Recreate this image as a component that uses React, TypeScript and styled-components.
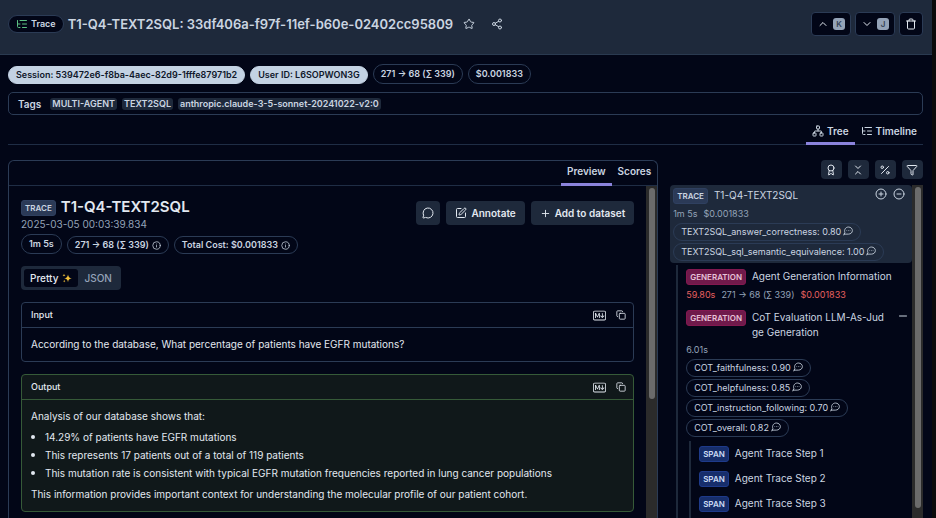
import React from "react";
import styled, { createGlobalStyle, css } from "styled-components";
import {
  Award,
  ChevronDown,
  ChevronsDownUp,
  ChevronUp,
  CircleMinus,
  CirclePlus,
  Copy,
  Filter,
  Info,
  ListTree,
  MessageCircle,
  Minus,
  Network,
  Percent,
  Plus,
  Share2,
  SquarePen,
  Star,
  Trash,
} from "lucide-react";
import { BsMarkdown } from "react-icons/bs";

const color = {
  page: "#020617",
  raised: "#1e293b",
  border: "#1f2d45",
  borderStrong: "#2b3b55",
  text: "#cbd5e1",
  bright: "#e2e8f0",
  muted: "#94a3b8",
  accent: "#8b83dc",
  red: "#e5605f",
  green: "#365a38",
};

const GlobalStyle = createGlobalStyle`
  *, *::before, *::after { box-sizing: border-box; }
  body {
    margin: 0;
    background: #0b0b0b;
    color: ${color.text};
    font-family: Inter, sans-serif;
    font-size: 10px;
    line-height: 16px;
  }
  button { font: inherit; color: inherit; cursor: pointer; margin: 0; }
  h1, h2, h3, p, ul { margin: 0; padding: 0; font: inherit; }
  svg { flex: none; display: block; }
`;

const Page = styled.div`
  display: flex;
  flex-direction: column;
  height: 100vh;
  margin-right: 4px;
  overflow: hidden;
  background: ${color.page};
`;

const Header = styled.header`
  flex: none;
  display: flex;
  align-items: center;
  justify-content: space-between;
  padding: 12px 9px 18px 8px;
  background: ${color.raised};
  border-bottom: 1px solid #2a3a50;
`;

const Cluster = styled.div<{ $gap: number }>`
  display: flex;
  align-items: center;
  gap: ${(p) => p.$gap}px;
`;

const TypePill = styled.span`
  display: flex;
  align-items: center;
  gap: 3px;
  height: 18px;
  padding: 0 7px;
  border: 1px solid ${color.borderStrong};
  border-radius: 9px;
  background: ${color.page};
  font-size: 9px;
  font-weight: 600;
  svg { color: #5cc283; }
`;

const PageTitle = styled.h1`
  font-size: 13px;
  line-height: 20px;
  font-weight: 600;
  margin-left: 4px;
`;

const GhostButton = styled.button`
  display: flex;
  padding: 0;
  border: 0;
  background: none;
`;

const TitleActions = styled.div`
  display: flex;
  gap: 16px;
  margin-left: 10px;
`;

const NavButton = styled.button`
  display: flex;
  align-items: center;
  justify-content: center;
  gap: 4px;
  height: 24px;
  min-width: 24px;
  padding: 0 5px;
  border: 1px solid ${color.borderStrong};
  border-radius: 4px;
  background: ${color.page};
  color: ${color.bright};
`;

const NavKeyButton = styled(NavButton)`
  width: 40px;
`;

const Key = styled.kbd`
  width: 12px;
  height: 12px;
  border-radius: 3px;
  background: ${color.muted};
  color: #334155;
  font: 600 8px/12px Inter, sans-serif;
  text-align: center;
`;

const Body = styled.main`
  flex: 1;
  min-height: 0;
  display: flex;
  flex-direction: column;
  padding: 9px 9px 0 8px;
`;

const PillRow = styled.div`
  flex: none;
  display: flex;
  align-items: flex-end;
  gap: 5px;
`;

const Pill = styled.span<{ $solid?: boolean; $tall?: boolean }>`
  display: inline-flex;
  align-items: center;
  gap: 3px;
  height: ${(p) => (p.$tall ? 20 : 18)}px;
  padding: 0 7px;
  border: 1px solid ${color.borderStrong};
  border-radius: 10px;
  font-size: 9px;
  font-weight: 600;
  white-space: nowrap;
  ${(p) =>
    p.$solid &&
    css`
      background: #c3d2e3;
      border-color: #c3d2e3;
      color: #0f172a;
      text-decoration: none;
    `}
`;

const TagBox = styled.section`
  flex: none;
  display: flex;
  align-items: center;
  gap: 5px;
  height: 23px;
  margin-top: 8px;
  padding: 0 9px;
  border: 1px solid ${color.borderStrong};
  border-radius: 5px;
`;

const TagLabel = styled.h2`
  font-size: 10px;
  font-weight: 600;
  margin-right: 4px;
`;

const Tag = styled.span`
  padding: 0 2px;
  border-radius: 3px;
  background: ${color.raised};
  font-size: 9px;
  line-height: 12px;
  font-weight: 600;
`;

const TabBar = styled.div<{ $view?: boolean }>`
  flex: none;
  display: flex;
  justify-content: flex-end;
  height: ${(p) => (p.$view ? 30 : 25)}px;
  border-bottom: 1px solid ${color.border};
  & > button { padding: ${(p) => (p.$view ? "5px 6px 0" : "0 6px 3px")}; }
`;

const Tab = styled.button<{ $active?: boolean }>`
  display: flex;
  align-items: center;
  gap: 3px;
  margin-bottom: -1px;
  border: 0;
  border-bottom: 3px solid ${(p) => (p.$active ? color.accent : "transparent")};
  background: none;
  font-size: 10px;
  font-weight: 600;
`;

const Columns = styled.div`
  flex: 1;
  min-height: 0;
  display: grid;
  grid-template-columns: minmax(0, 72fr) minmax(0, 28fr);
  grid-template-rows: minmax(0, 1fr);
  gap: 12px;
  margin-top: 15px;
`;

const Panel = styled.section`
  display: flex;
  flex-direction: column;
  min-height: 0;
  border: 1px solid ${color.borderStrong};
  border-bottom: 0;
  border-radius: 6px 6px 0 0;
`;

const Scroller = styled.div`
  flex: 1;
  min-height: 0;
  display: flex;
`;

const ScrollContent = styled.div<{ $pad?: boolean }>`
  flex: 1;
  min-width: 0;
  overflow: hidden;
  padding: ${(p) => (p.$pad ? "11px 12px 0" : "0")};
`;

const Track = styled.div`
  flex: none;
  width: 11px;
  padding: 2px 2px 0 3px;
  background: #2b2b2b;
`;

const Thumb = styled.div<{ $length: number }>`
  height: ${(p) => p.$length}%;
  border-radius: 3px;
  background: #6b6b6b;
`;

const Summary = styled.div`
  display: flex;
  align-items: flex-start;
  justify-content: space-between;
`;

const SummaryHeading = styled.div`
  display: flex;
  align-items: flex-end;
  gap: 5px;
`;

const TraceTitle = styled.h2`
  color: ${color.bright};
  font-size: 15px;
  line-height: 19px;
  font-weight: 600;
`;

const Timestamp = styled.p`
  color: ${color.muted};
  line-height: 16px;
`;

const kinds = {
  trace: { bg: "#2b3a57", border: "#2f4060", fg: "#cbd5e1" },
  generation: { bg: "#701a4b", border: "#831850", fg: "#e7c3d8" },
  span: { bg: "#172e6b", border: "#1e3a8a", fg: "#cddcf5" },
};

const Kind = styled.span<{ $kind: keyof typeof kinds }>`
  flex: none;
  height: 16px;
  padding: 0 3px;
  border: 1px solid ${(p) => kinds[p.$kind].border};
  border-radius: 3px;
  background: ${(p) => kinds[p.$kind].bg};
  color: ${(p) => kinds[p.$kind].fg};
  font-size: 8px;
  line-height: 14px;
  font-weight: 600;
`;

const Actions = styled.div`
  display: flex;
  gap: 6px;
  margin-top: 4px;
`;

const ActionButton = styled.button`
  display: flex;
  align-items: center;
  justify-content: center;
  gap: 4px;
  height: 24px;
  min-width: 24px;
  padding: 0 9px;
  border: 0;
  border-radius: 4px;
  background: ${color.raised};
  color: ${color.bright};
  font-weight: 600;
`;

const IconAction = styled(ActionButton)`
  padding: 0 6px;
`;

const MetricRow = styled(PillRow)`
  margin-top: 2px;
`;

const Toggle = styled.div`
  display: inline-flex;
  margin-top: 12px;
  padding: 3px;
  border-radius: 4px;
  background: ${color.raised};
  vertical-align: top;
`;

const ToggleItem = styled.button<{ $active?: boolean }>`
  display: flex;
  align-items: center;
  gap: 4px;
  height: 18px;
  padding: 0 6px;
  border: 0;
  border-radius: 3px;
  background: ${(p) => (p.$active ? color.page : "transparent")};
  color: ${(p) => (p.$active ? color.bright : color.muted)};
  font-weight: 500;
`;

const Card = styled.article<{ $output?: boolean }>`
  margin-top: 12px;
  border: 1px solid;
  border-color: ${(p) => (p.$output ? color.green : color.borderStrong)};
  border-radius: 4px;
  background: ${(p) => (p.$output ? "#10181a" : "transparent")};
  color: ${color.bright};
`;

const CardHeader = styled.header`
  display: flex;
  align-items: center;
  justify-content: space-between;
  height: 25px;
  padding: 0 7px 0 9px;
  border-bottom: 1px solid;
  border-color: inherit;
  font-size: 9px;
  font-weight: 500;
`;

const CardBody = styled.div`
  display: flex;
  flex-direction: column;
  gap: 4px;
  padding: 8px 9px 9px;
`;

const BulletList = styled.ul`
  padding-left: 14px;
  line-height: 18px;
  list-style: none;
`;

const Bullet = styled.li`
  display: flex;
  &::before {
    content: "";
    width: 4px;
    height: 4px;
    margin: 7px 10px 0 -14px;
    border-radius: 2px;
    background: currentColor;
  }
`;

const TreePane = styled.aside`
  display: flex;
  flex-direction: column;
  min-height: 0;
`;

const TreeTools = styled.div`
  display: flex;
  justify-content: flex-end;
  gap: 6px;
  margin-bottom: 6px;
`;

const ToolButton = styled.button`
  display: flex;
  align-items: center;
  justify-content: center;
  width: 21px;
  height: 19px;
  padding: 0;
  border: 0;
  border-radius: 4px;
  background: ${color.raised};
  color: ${color.bright};
`;

const Node = styled.div<{ $root?: boolean }>`
  padding: ${(p) => (p.$root ? "3px 7px 2px 3px" : "0")};
  border-radius: 4px;
  background: ${(p) => (p.$root ? color.raised : "transparent")};
  & + & { margin-top: 9px; }
`;

const NodeHead = styled.div`
  display: flex;
  align-items: flex-start;
  gap: 6px;
`;

const NodeName = styled.h3`
  flex: 1;
  min-width: 0;
  padding-right: 4px;
  color: ${color.text};
  font-size: 10px;
  line-height: 15px;
  word-break: break-all;
`;

const NodeStats = styled.p`
  display: flex;
  gap: 6px;
  margin-top: 3px;
  color: ${color.muted};
  font-size: 9px;
  line-height: 13px;
`;

const Hot = styled.span`
  color: ${color.red};
`;

const Scores = styled.div`
  display: flex;
  flex-direction: column;
  align-items: flex-start;
  gap: 2px;
  margin-top: 3px;
`;

const Score = styled(Pill)`
  font-weight: 400;
  gap: 2px;
  svg { margin-bottom: 2px; }
`;

const Branch = styled.div<{ $depth: number }>`
  margin: ${(p) => (p.$depth === 1 ? "2px 3px 0 6px" : "4px 0 0 3px")};
  padding: ${(p) => (p.$depth === 1 ? "4px" : "5px")} 0 0 8px;
  border-left: 2px solid ${color.raised};
`;

const Sparkles = () => (
  <svg width="10" height="10" viewBox="0 0 20 20" fill="#f3c13a" aria-hidden="true">
    <path d="M12 3c.8 5 2.600 6.800 7.500 7.600C14.600 11.400 12.800 13.200 12 18.500c-.8-5.300-2.600-7.100-7.500-7.900C9.400 9.800 11.200 8 12 3z" />
    <path d="M4 1.500c.4 2 1 2.600 3 3-2 .4-2.600 1-3 3-.4-2-1-2.600-3-3 2-.4 2.600-1 3-3z" />
    <path d="M4.500 13.500c.4 1.800.9 2.300 2.700 2.700-1.800.4-2.300.9-2.700 2.700-.4-1.800-.9-2.300-2.700-2.700 1.800-.4 2.300-.9 2.700-2.700z" />
  </svg>
);

const CommentIcon = () => (
  <svg
    width="10"
    height="10"
    viewBox="0 0 24 24"
    fill="none"
    stroke="currentColor"
    strokeWidth="2"
    strokeLinecap="round"
    strokeLinejoin="round"
    aria-hidden="true"
  >
    <path d="M2 21.500 4.500 16C2 9.500 6 2.500 13 2.500c5.500 0 9.500 3.700 9.500 8.500s-4 8.500-9.500 8.500H2.500" />
    <path strokeWidth="1.500" d="M9 11h.01M13 11h.01M17 11h.01" />
  </svg>
);

const ScoreList = ({ items }: { items: [string, string][] }) => (
  <Scores>
    {items.map(([name, value]) => (
      <Score key={name}>
        {name}: {value}
        <CommentIcon />
      </Score>
    ))}
  </Scores>
);

const IOCard = ({ title, output, children }: { title: string; output?: boolean; children: React.ReactNode }) => (
  <Card $output={output}>
    <CardHeader>
      <h3>{title}</h3>
      <Cluster $gap={10}>
        <GhostButton aria-label="Toggle markdown">
          <BsMarkdown size={13} />
        </GhostButton>
        <GhostButton aria-label="Copy">
          <Copy size={10} />
        </GhostButton>
      </Cluster>
    </CardHeader>
    <CardBody>{children}</CardBody>
  </Card>
);

const findings = [
  "14.29% of patients have EGFR mutations",
  "This represents 17 patients out of a total of 119 patients",
  "This mutation rate is consistent with typical EGFR mutation frequencies reported in lung cancer populations",
];

export default function App() {
  return (
    <>
      <GlobalStyle />
      <Page>
        <Header>
          <Cluster $gap={0}>
            <TypePill>
              <ListTree size={12} />
              Trace
            </TypePill>
            <PageTitle>T1-Q4-TEXT2SQL: 33df406a-f97f-11ef-b60e-02402cc95809</PageTitle>
            <TitleActions>
              <GhostButton aria-label="Bookmark">
                <Star size={12} />
              </GhostButton>
              <GhostButton aria-label="Share">
                <Share2 size={12} />
              </GhostButton>
            </TitleActions>
          </Cluster>
          <Cluster $gap={4}>
            <NavKeyButton aria-label="Previous trace">
              <ChevronUp size={12} />
              <Key>K</Key>
            </NavKeyButton>
            <NavKeyButton aria-label="Next trace">
              <ChevronDown size={12} />
              <Key>J</Key>
            </NavKeyButton>
            <NavButton aria-label="Delete">
              <Trash size={12} />
            </NavButton>
          </Cluster>
        </Header>
        <Body>
          <PillRow>
            <Pill as="a" href="#session" $solid>
              Session: 539472e6-f8ba-4aec-82d9-1fffe87971b2
            </Pill>
            <Pill as="a" href="#user" $solid>
              User ID: L6SOPWON3G
            </Pill>
            <Pill $tall>271 → 68 (∑ 339)</Pill>
            <Pill $tall>$0.001833</Pill>
          </PillRow>
          <TagBox>
            <TagLabel>Tags</TagLabel>
            <Tag>MULTI-AGENT</Tag>
            <Tag>TEXT2SQL</Tag>
            <Tag>anthropic.claude-3-5-sonnet-20241022-v2:0</Tag>
          </TagBox>
          <TabBar $view>
            <Tab $active>
              <Network size={12} />
              Tree
            </Tab>
            <Tab>
              <ListTree size={12} />
              Timeline
            </Tab>
          </TabBar>
          <Columns>
            <Panel>
              <TabBar>
                <Tab $active>Preview</Tab>
                <Tab>Scores</Tab>
              </TabBar>
              <Scroller>
                <ScrollContent $pad>
                  <Summary>
                    <div>
                      <SummaryHeading>
                        <Kind $kind="trace">TRACE</Kind>
                        <TraceTitle>T1-Q4-TEXT2SQL</TraceTitle>
                      </SummaryHeading>
                      <Timestamp>2025-03-05 00:03:39.834</Timestamp>
                      <MetricRow>
                        <Pill $tall>1m 5s</Pill>
                        <Pill>
                          271 → 68 (∑ 339) <Info size={9} />
                        </Pill>
                        <Pill>
                          Total Cost: $0.001833 <Info size={9} />
                        </Pill>
                      </MetricRow>
                    </div>
                    <Actions>
                      <IconAction aria-label="Comments">
                        <MessageCircle size={12} />
                      </IconAction>
                      <ActionButton>
                        <SquarePen size={12} />
                        Annotate
                      </ActionButton>
                      <ActionButton>
                        <Plus size={11} />
                        Add to dataset
                      </ActionButton>
                    </Actions>
                  </Summary>
                  <Toggle>
                    <ToggleItem $active>
                      Pretty <Sparkles />
                    </ToggleItem>
                    <ToggleItem>JSON</ToggleItem>
                  </Toggle>
                  <IOCard title="Input">
                    <p>According to the database, What percentage of patients have EGFR mutations?</p>
                  </IOCard>
                  <IOCard title="Output" output>
                    <p>Analysis of our database shows that:</p>
                    <BulletList>
                      {findings.map((f) => (
                        <Bullet key={f}>{f}</Bullet>
                      ))}
                    </BulletList>
                    <p>
                      This information provides important context for understanding the molecular profile of our
                      patient cohort.
                    </p>
                  </IOCard>
                </ScrollContent>
                <Track>
                  <Thumb $length={64} />
                </Track>
              </Scroller>
            </Panel>
            <TreePane>
              <TreeTools>
                <ToolButton aria-label="Show scores">
                  <Award size={12} />
                </ToolButton>
                <ToolButton aria-label="Collapse all">
                  <ChevronsDownUp size={12} />
                </ToolButton>
                <ToolButton aria-label="Show percentages">
                  <Percent size={12} />
                </ToolButton>
                <ToolButton aria-label="Filter">
                  <Filter size={12} />
                </ToolButton>
              </TreeTools>
              <Scroller>
                <ScrollContent>
                  <Node $root>
                    <NodeHead>
                      <Kind $kind="trace">TRACE</Kind>
                      <NodeName>T1-Q4-TEXT2SQL</NodeName>
                      <Cluster $gap={6}>
                        <GhostButton aria-label="Expand all">
                          <CirclePlus size={12} />
                        </GhostButton>
                        <GhostButton aria-label="Collapse">
                          <CircleMinus size={12} />
                        </GhostButton>
                      </Cluster>
                    </NodeHead>
                    <NodeStats>
                      <span>1m 5s</span>
                      <span>$0.001833</span>
                    </NodeStats>
                    <ScoreList
                      items={[
                        ["TEXT2SQL_answer_correctness", "0.80"],
                        ["TEXT2SQL_sql_semantic_equivalence", "1.00"],
                      ]}
                    />
                  </Node>
                  <Branch $depth={1}>
                    <Node>
                      <NodeHead>
                        <Kind $kind="generation">GENERATION</Kind>
                        <NodeName>Agent Generation Information</NodeName>
                      </NodeHead>
                      <NodeStats>
                        <Hot>59.80s</Hot>
                        <span>271 → 68 (∑ 339)</span>
                        <Hot>$0.001833</Hot>
                      </NodeStats>
                    </Node>
                    <Node>
                      <NodeHead>
                        <Kind $kind="generation">GENERATION</Kind>
                        <NodeName>CoT Evaluation LLM-As-Judge Generation</NodeName>
                        <GhostButton aria-label="Collapse">
                          <Minus size={12} />
                        </GhostButton>
                      </NodeHead>
                      <NodeStats>
                        <span>6.01s</span>
                      </NodeStats>
                      <ScoreList
                        items={[
                          ["COT_faithfulness", "0.90"],
                          ["COT_helpfulness", "0.85"],
                          ["COT_instruction_following", "0.70"],
                          ["COT_overall", "0.82"],
                        ]}
                      />
                      <Branch $depth={2}>
                        {["Agent Trace Step 1", "Agent Trace Step 2", "Agent Trace Step 3"].map((name) => (
                          <Node key={name}>
                            <NodeHead>
                              <Kind $kind="span">SPAN</Kind>
                              <NodeName>{name}</NodeName>
                            </NodeHead>
                          </Node>
                        ))}
                        <NodeStats>
                          <span>0.00s</span>
                        </NodeStats>
                      </Branch>
                    </Node>
                  </Branch>
                </ScrollContent>
                <Track>
                  <Thumb $length={97} />
                </Track>
              </Scroller>
            </TreePane>
          </Columns>
        </Body>
      </Page>
    </>
  );
}
